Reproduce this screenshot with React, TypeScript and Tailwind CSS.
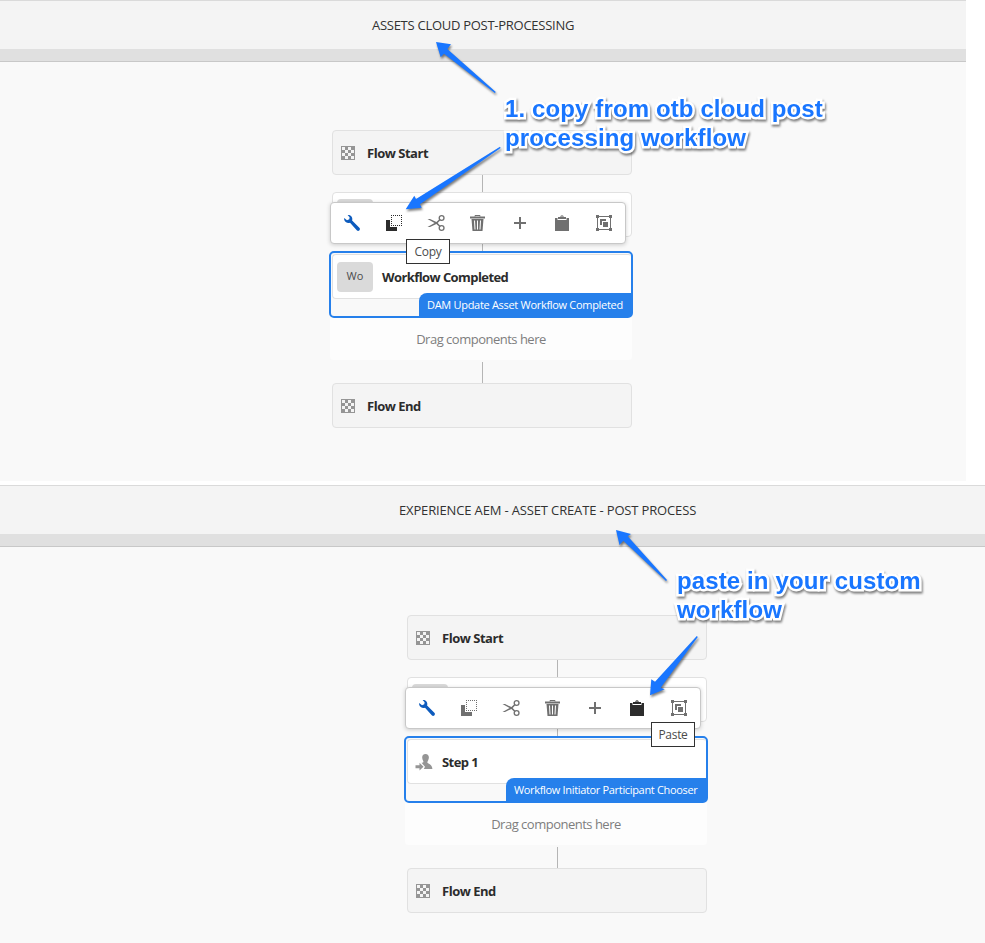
import type { ReactNode } from 'react';

const sans = 'font-["Open_Sans","Noto_Sans",sans-serif]';

function Icon({ color, children }: { color: string; children: ReactNode }) {
  return (
    <svg width="18" height="18" viewBox="0 0 18 18" fill="currentColor" className={`shrink-0 ${color}`}>
      {children}
    </svg>
  );
}

const Wrench = () => (
  <Icon color="text-[#0d5bbd]">
    <path d="M4.6 1C7.3.6 9.6 2.8 9.3 5.4L9.1 6.6 16.6 14Q17.4 15 16.5 16.3 15.2 17.6 14 16.6L7 8.8C4.6 9.7 1.7 8.3 1.1 5.2L1.2 4 4 6.2 6.3 5.3 6.6 3.3Z" />
  </Icon>
);

const Copy = ({ color }: { color: string }) => (
  <Icon color={color}>
    <path d="M1 6h4v7h7v4H1z" />
    <path d="M6.5 1.5h10v10h-10z" fill="none" stroke="currentColor" strokeDasharray="1 1" strokeDashoffset=".5" shapeRendering="crispEdges" />
  </Icon>
);

const Cut = () => (
  <Icon color="text-[#707070]">
    <g fill="none" stroke="currentColor" strokeWidth="1.3">
      <circle cx="14.6" cy="4" r="2.4" />
      <circle cx="14.6" cy="14" r="2.4" />
    </g>
    <path d="M.5 5 3 5.1 9.4 8.1 12.6 5l.9.9-2.8 3.1 2.8 3.1-.9.9-3.2-3.1L3 12.9.5 13 7.6 9z" />
  </Icon>
);

const Trash = () => (
  <Icon color="text-[#707070]">
    <path d="M6 2.5v-1h5v1" fill="none" stroke="currentColor" />
    <path d="M1 2.5h15v2H1z" />
    <path d="M2.5 5h12l-1 12h-10z" />
    <path d="M5.5 6.5l.5 9M8.5 6.5v9M11.5 6.5l-.5 9" stroke="#fff" strokeWidth="1" />
  </Icon>
);

const Plus = () => (
  <Icon color="text-[#707070]">
    <path d="M8 3h2v5h5v2h-5v5H8v-5H3V8h5z" />
  </Icon>
);

const Paste = ({ color }: { color: string }) => (
  <Icon color={color}>
    <path d="M2 4h2.5v2h9V4H16v13H2z" />
    <path d="M5 5V3h2.3a1.7 1.7 0 0 1 3.4 0H13v2zM8.3 3h1.4a.7.7 0 0 0-1.4 0z" fillRule="evenodd" />
  </Icon>
);

const Group = () => (
  <Icon color="text-[#707070]">
    <path d="M2.5 2.5h13v13h-13z" fill="none" stroke="currentColor" />
    <path d="M1 1h3v3H1zM14 1h3v3h-3zM1 14h3v3H1zM14 14h3v3h-3zM5 5h6v2H7v4H5z" />
    <path d="M8 8h5v5H8z" />
    <path d="M7.5 12.5v-5h5" fill="none" stroke="#fff" />
  </Icon>
);

function Checker() {
  const cells = Array.from({ length: 16 }, (_, i) => i).filter((i) => ((i % 4) + Math.floor(i / 4)) % 2 === 1);
  return (
    <svg width="14" height="14" viewBox="0 0 14 14" className="shrink-0">
      <rect width="14" height="14" fill="#959595" />
      <rect x="1" y="1" width="12" height="12" fill="#f4f4f4" />
      {cells.map((i) => (
        <rect key={i} x={1 + (i % 4) * 3} y={1 + Math.floor(i / 4) * 3} width="3" height="3" fill="#959595" />
      ))}
    </svg>
  );
}

const Participant = () => (
  <svg width="18" height="18" viewBox="0 0 18 18" fill="#959595" className="shrink-0">
    <path d="M10.5 1C13 1 14.2 2.8 13.8 5.3 13.5 7.4 12.4 8.2 12.4 9.4c0 1.4 4.8 1.2 5 6.6H8.8l1.2-2.2-3.5-4c1.5-.2 2.2-.6 1.8-1.6C6.3 4.8 7 1 10.5 1z" />
    <path d="M.5 12.2h4v-2.4l4 4-4 3.8v-2.4h-4z" />
  </svg>
);

const stepLabel = 'pt-[2px] text-[13px] font-bold tracking-[-0.58px] text-[#2c2c2c]';

function Endpoint({ label }: { label: string }) {
  return (
    <div className="ml-[3px] flex h-[45px] w-[300px] items-center rounded-[4px] border border-[#e1e1e1] bg-[#f4f4f4] pl-[8px]">
      <Checker />
      <span className="ml-[12px] pt-[2px] text-[13px] font-bold tracking-[-0.48px] text-[#2c2c2c]">{label}</span>
    </div>
  );
}

interface PanelProps {
  title: string;
  titleClass: string;
  columnClass: string;
  panelClass: string;
  step: ReactNode;
  tag: string;
  tagClass: string;
  copyColor: string;
  pasteColor: string;
  tooltip: string;
  tooltipClass: string;
}

function Panel(p: PanelProps) {
  return (
    <section className={`flex flex-col bg-[#f9f9f9] ${p.panelClass}`}>
      <header className="flex h-[49px] shrink-0 items-center border-t border-[#dadada] bg-[#f4f4f4]">
        <h1 className={`whitespace-nowrap pt-[2px] text-[13px] text-[#323232] ${p.titleClass}`}>{p.title}</h1>
      </header>
      <div className="h-[13px] shrink-0 border-b border-[#c8c8c8] bg-[#e0e0e0]" />
      <div className={`pt-[68px] ${p.columnClass}`}>
        <div className="relative w-[304px]">
          <Endpoint label="Flow Start" />
          <div className="ml-[153px] h-[17px] w-px bg-[#b5b5b5]" />
          <div className="ml-[3px] h-[45px] w-[300px] rounded-[4px] border border-[#e1e1e1] bg-white pl-[4px] pt-[6px]">
            <div className="h-[30px] w-[36px] rounded-[4px] bg-[#dadada]" />
          </div>
          <div className="ml-[153px] h-[14px] w-px bg-[#b5b5b5]" />
          <div className="flex h-[67px] flex-col rounded-[5px] border-2 border-[#2680eb] pl-px pt-px">
            <div className="flex h-[45px] shrink-0 items-center rounded-l-[4px] rounded-tr-[3px] border border-r-0 border-[#e1e1e1] bg-white">
              {p.step}
            </div>
            <div className={`-mt-[6px] flex h-[24px] shrink-0 items-center self-end whitespace-nowrap rounded-tl-[8px] bg-[#2680eb] pl-[8px] text-[11px] font-medium text-white ${p.tagClass}`}>
              {p.tag}
            </div>
          </div>
          <div className="ml-px flex h-[42px] w-[302px] items-center justify-center rounded-b-[4px] bg-[#fdfdfd] pt-[2px] text-[13px] tracking-[-0.5px] text-[#7e7e7e]">
            Drag components here
          </div>
          <div className="ml-[153px] mt-[2px] h-[21px] w-px bg-[#b5b5b5]" />
          <Endpoint label="Flow End" />

          <div className="absolute left-px top-[72px] flex h-[42px] w-[296px] items-center gap-[24px] rounded-[4px] border border-[#c8c8c8] bg-white pl-[12px] shadow-[0_1px_4px_rgba(0,0,0,0.18)]">
            <Wrench />
            <Copy color={p.copyColor} />
            <Cut />
            <Trash />
            <Plus />
            <Paste color={p.pasteColor} />
            <Group />
          </div>
          <div className={`absolute flex h-[25px] w-[44px] items-center justify-center border border-[#323232] bg-white text-[12px] tracking-[-0.3px] text-[#4b4b4b] ${p.tooltipClass}`}>
            {p.tooltip}
          </div>
        </div>
      </div>
    </section>
  );
}

const note =
  'absolute whitespace-nowrap font-["Liberation_Sans",Arial,sans-serif] text-[24px] font-bold leading-[29px] tracking-[0.12px] text-[#1976ff] [-webkit-text-stroke:5px_white] [paint-order:stroke_fill] drop-shadow-[1px_2px_1px_rgba(0,0,0,0.5)]';

export default function App() {
  return (
    <main className={`relative h-[943px] w-[985px] overflow-hidden bg-white ${sans}`}>
      <Panel
        panelClass="h-[481px] w-[966px]"
        columnClass="pl-[329px]"
        title="ASSETS CLOUD POST-PROCESSING"
        titleClass="pl-[372px] tracking-[-0.27px]"
        step={
          <>
            <span className="ml-[4px] flex h-[30px] w-[36px] items-center justify-center rounded-[4px] bg-[#dadada] text-[11px] text-[#4b4b4b]">Wo</span>
            <span className={`ml-[9px] ${stepLabel}`}>Workflow Completed</span>
          </>
        }
        tag="DAM Update Asset Workflow Completed"
        tagClass="w-[212px] tracking-[-0.3px]"
        copyColor="text-[#2c2c2c]"
        pasteColor="text-[#707070]"
        tooltip="Copy"
        tooltipClass="left-[77px] top-[109px]"
      />
      <div className="h-[4px]" />
      <Panel
        panelClass="h-[458px] w-full"
        columnClass="pl-[404px]"
        title="EXPERIENCE AEM - ASSET CREATE - POST PROCESS"
        titleClass="pl-[399px] tracking-[-0.15px]"
        step={
          <>
            <span className="ml-[7px] flex">
              <Participant />
            </span>
            <span className={`ml-[9px] ${stepLabel}`}>Step 1</span>
          </>
        }
        tag="Workflow Initiator Participant Chooser"
        tagClass="w-[200px] tracking-[-0.33px]"
        copyColor="text-[#707070]"
        pasteColor="text-[#2c2c2c]"
        tooltip="Paste"
        tooltipClass="left-[247px] top-[107px]"
      />
      <svg width="985" height="943" viewBox="0 0 985 943" fill="#1976ff" className="pointer-events-none absolute inset-0 drop-shadow-[1px_2px_1px_rgba(0,0,0,0.5)]">
        <path d="M436 42 451 44.3 447.3 49 495.8 92 494.8 93 444 53.7 440.7 57.3z" />
        <path d="M405.7 209.3 414.3 195.7 416 199 500 146.8 500.6 148 420 204.3 421.7 207.7z" />
        <path d="M616 530 631 534 627.7 536.3 667 580 666 581 623.3 540.7 619.5 545z" />
        <path d="M650 695.3 651.3 679.3 655 681.7 696.8 636 697.8 637 660.7 687.7 664.7 689.3z" />
      </svg>
      <p className={`${note} left-[505px] top-[94px]`}>
        1. copy from otb cloud post
        <br />
        processing workflow
      </p>
      <p className={`${note} left-[677px] top-[566px]`}>
        paste in your custom
        <br />
        workflow
      </p>
    </main>
  );
}
